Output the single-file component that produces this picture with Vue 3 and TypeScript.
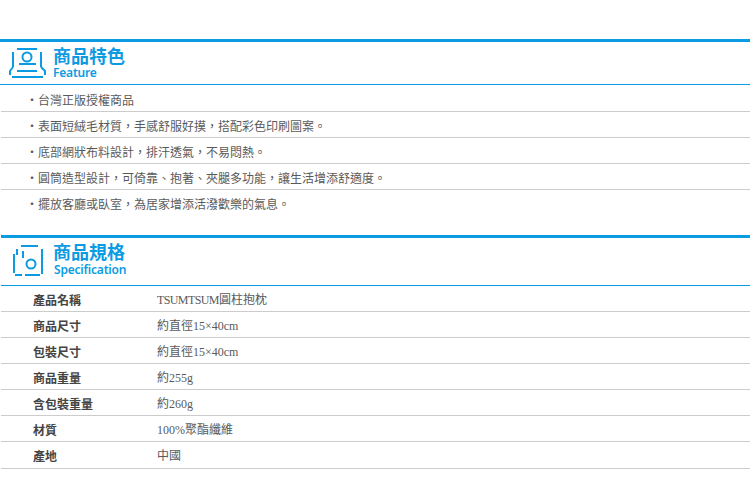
<script setup lang="ts">
const C = '\uFF0C'
const features: string[] = [
  '台灣正版授權商品',
  `表面短絨毛材質${C}手感舒服好摸${C}搭配彩色印刷圖案。`,
  `底部網狀布料設計${C}排汗透氣${C}不易悶熱。`,
  `圓筒造型設計${C}可倚靠、抱著、夾腿多功能${C}讓生活增添舒適度。`,
  `擺放客廳或臥室${C}為居家增添活潑歡樂的氣息。`,
]
const specs: { k: string; pre?: string; v: string }[] = [
  { k: '產品名稱', pre: 'TSUMTSUM', v: '圓柱抱枕' },
  { k: '商品尺寸', v: '約直徑15×40cm' },
  { k: '包裝尺寸', v: '約直徑15×40cm' },
  { k: '商品重量', v: '約255g' },
  { k: '含包裝重量', v: '約260g' },
  { k: '材質', v: '100%聚酯纖維' },
  { k: '產地', v: '中國' },
]
</script>

<template>
  <main class="page">
    <section class="first">
      <header class="head">
        <svg class="ico" width="38" height="32" viewBox="0 0 38 32" fill="none" stroke="#0b9be3" stroke-width="2">
          <path d="M8 2h20" />
          <path d="M4 5v15M32 5v15" />
          <circle cx="18" cy="10" r="4.5" />
          <path d="M10 17h17" />
          <path d="M4 20L1 24v4M32 20l4 4v4" />
          <path d="M8 24h20" />
          <path d="M3 30h31" />
        </svg>
        <div class="titles">
          <h2>商品特色</h2>
          <p class="en1">Feature</p>
        </div>
      </header>
      <ul class="feat">
        <li v-for="f in features" :key="f"><span class="dot">・</span>{{ f }}</li>
      </ul>
    </section>
    <section class="second">
      <header class="head h2">
        <svg class="ico" width="32" height="34" viewBox="0 0 32 34" fill="none" stroke="#0b9be3" stroke-width="2">
          <path d="M9 2h17" />
          <path d="M30 5v25" />
          <path d="M3 31h7M13 31h15" />
          <path d="M2 10v19M5 5v6" />
          <path d="M11 7v7" />
          <circle cx="19" cy="20" r="4.5" />
        </svg>
        <div class="titles">
          <h2>商品規格</h2>
          <p class="en2">Specification</p>
        </div>
      </header>
      <div class="table">
        <div v-for="s in specs" :key="s.k" class="row">
          <b>{{ s.k }}</b>
          <span class="val"><small v-if="s.pre">{{ s.pre }}</small>{{ s.v }}</span>
        </div>
      </div>
    </section>
  </main>
</template>

<style scoped>
.page {
  width: 750px;
  height: 496px;
  padding-top: 39px;
  box-sizing: border-box;
  overflow: hidden;
  background: #fff;
  font-family: "Noto Sans CJK TC", sans-serif;
  color: #5a5a5a;
  font-size: 12px;
}
.second {
  margin-top: 19px;
}
.head {
  display: flex;
  align-items: flex-start;
  height: 42px;
  border-top: 3px solid #0b9be3;
  border-bottom: 1px solid #0b9be3;
  padding-left: 9px;
}
.head.h2 {
  height: 47px;
  margin-left: 1px;
  padding-left: 11px;
}
.ico {
  margin-top: 5px;
  flex: none;
}
.h2 .ico {
  margin-top: 6px;
}
.titles {
  margin-left: 6px;
  color: #0b9be3;
}
.h2 .titles {
  margin-left: 9px;
}
h2 {
  margin: 4px 0 0;
  font-size: 18px;
  line-height: 18px;
  font-weight: 700;
}
.titles p {
  font-family: "Noto Sans", sans-serif;
  font-size: 12px;
  line-height: 14px;
  font-weight: 600;
  letter-spacing: -0.2px;
}
.en1 {
  margin: 2px 0 0;
}
.en2 {
  margin: 3px 0 0 1px;
}
.feat {
  list-style: none;
  margin: 0;
  padding: 1px 0 0 1px;
}
.feat li {
  height: 26px;
  line-height: 27px;
  box-sizing: border-box;
  border-bottom: 1px solid #ccc;
  padding-left: 25px;
}
.feat li:last-child {
  border-bottom: 0;
}
.dot {
  display: inline-block;
  width: 12px;
}
.table {
  padding-left: 1px;
}
.row {
  display: flex;
  height: 26px;
  line-height: 27px;
  box-sizing: border-box;
  border-bottom: 1px solid #ccc;
  font-family: "Liberation Serif", "Noto Sans CJK TC", serif;
}
.row:last-child {
  height: 27px;
}
.row b {
  width: 156px;
  box-sizing: border-box;
  padding-left: 32px;
  color: #444;
  font-family: "Noto Sans CJK TC", sans-serif;
  font-weight: 700;
}
.val {
  padding-top: 1px;
}
.val small {
  font-size: 12px;
  letter-spacing: -0.6px;
}
</style>
